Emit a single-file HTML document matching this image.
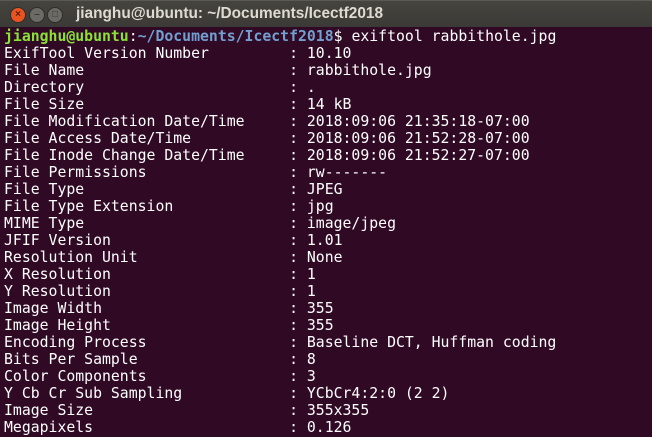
<!DOCTYPE html>
<html><head><style>
body{margin:0;width:652px;height:437px;overflow:hidden;background:#300a24;font-family:"Liberation Mono",monospace;}
#tb{position:absolute;left:0;top:0;width:652px;height:27px;background:linear-gradient(#45443f,#3b3a36);border-top:1px solid #5a5954;box-sizing:border-box}
.b{position:absolute;top:6px;width:16px;height:16px;border-radius:50%;background:#6b6a65;border:1px solid #2e2d2a;box-sizing:border-box;color:#3a3935;font:bold 10px "Liberation Sans",sans-serif;text-align:center;line-height:14px}
#t{position:absolute;left:76px;top:4px;color:#dfdbd2;font:bold 15.4px "Liberation Sans",sans-serif;white-space:nowrap}
pre{position:absolute;left:4px;top:28px;margin:0;color:#fff;font-size:14.8px;line-height:17px;}
.g{color:#8ae234;font-weight:bold}.bl{color:#729fcf;font-weight:bold}
</style></head><body>
<div id="tb">
<div class="b" style="left:10px;background:#e95420;color:#5a1e08">×</div>
<div class="b" style="left:29px">–</div>
<div class="b" style="left:47px">□</div>
<div id="t">jianghu@ubuntu: ~/Documents/Icectf2018</div>
</div>
<pre><span class="g">jianghu@ubuntu</span>:<span class="bl">~/Documents/Icectf2018</span>$ exiftool rabbithole.jpg
ExifTool Version Number         : 10.10
File Name                       : rabbithole.jpg
Directory                       : .
File Size                       : 14 kB
File Modification Date/Time     : 2018:09:06 21:35:18-07:00
File Access Date/Time           : 2018:09:06 21:52:28-07:00
File Inode Change Date/Time     : 2018:09:06 21:52:27-07:00
File Permissions                : rw-------
File Type                       : JPEG
File Type Extension             : jpg
MIME Type                       : image/jpeg
JFIF Version                    : 1.01
Resolution Unit                 : None
X Resolution                    : 1
Y Resolution                    : 1
Image Width                     : 355
Image Height                    : 355
Encoding Process                : Baseline DCT, Huffman coding
Bits Per Sample                 : 8
Color Components                : 3
Y Cb Cr Sub Sampling            : YCbCr4:2:0 (2 2)
Image Size                      : 355x355
Megapixels                      : 0.126</pre>
</body></html>
